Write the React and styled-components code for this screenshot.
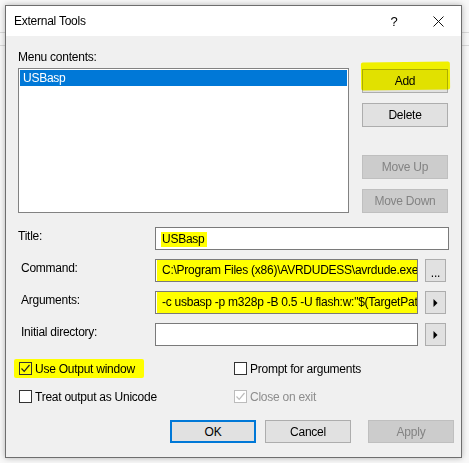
import React from "react";
import styled, { createGlobalStyle, css } from "styled-components";

const Global = createGlobalStyle`
  html, body { margin: 0; padding: 0; }
  body {
    width: 469px;
    height: 463px;
    overflow: hidden;
    font-family: "Segoe UI", "Liberation Sans", Arial, sans-serif;
    font-size: 12px;
    letter-spacing: -0.25px;
    color: #000;
    background-color: #f8f8f8;
    background-image:
      linear-gradient(#d9d9d9, #d9d9d9),
      linear-gradient(#d9d9d9, #d9d9d9);
    background-repeat: no-repeat;
    background-size: 100% 1px, 100% 1px;
    background-position: 0 32px, 0 45px;
  }
`;

const Page = styled.div`
  padding: 5px 0 0 5px;
`;

const Dialog = styled.div`
  width: 457px;
  box-sizing: border-box;
  border: 1px solid #6e6e6e;
  box-shadow: 0 0 6px rgba(0, 0, 0, 0.28);
  background: #f0f0f0;
`;

const TitleBar = styled.div`
  height: 30px;
  background: #fff;
  display: flex;
  align-items: center;
  padding-left: 8px;
`;

const TitleText = styled.div`
  flex: 1;
  font-size: 12px;
`;

const Help = styled.div`
  width: 16px;
  text-align: center;
  font-size: 13px;
  margin-right: 13px;
`;

const Close = styled.div`
  width: 46px;
  height: 30px;
  display: flex;
  align-items: center;
  justify-content: center;
`;

const Body = styled.div`
  padding: 13px 7px 14px 12px;
`;

const TopSection = styled.div`
  display: flex;
  align-items: flex-start;
`;

const ListCol = styled.div`
  width: 331px;
  display: flex;
  flex-direction: column;
`;

const Label = styled.div`
  line-height: 16px;
  height: 16px;
  white-space: nowrap;
`;

const ListBox = styled.div`
  margin-top: 3px;
  height: 145px;
  box-sizing: border-box;
  border: 1px solid #828282;
  background: #fff;
  padding: 1px;
`;

const ListItem = styled.div`
  height: 16px;
  line-height: 16px;
  padding-left: 3px;
  background: ${(p) => (p.$selected ? "#0078d7" : "transparent")};
  color: ${(p) => (p.$selected ? "#fff" : "#000")};
`;

const ButtonCol = styled.div`
  margin-left: 13px;
  padding-top: 20px;
  display: flex;
  flex-direction: column;
`;

const Button = styled.div`
  position: relative;
  width: 86px;
  height: ${(p) => p.$h || 23}px;
  box-sizing: border-box;
  display: flex;
  align-items: center;
  justify-content: center;
  margin-top: ${(p) => p.$mt || 0}px;
  border: 1px solid #adadad;
  background: #e1e1e1;
  color: #000;
  ${(p) =>
    p.$disabled &&
    css`
      border-color: #bfbfbf;
      background: #cccccc;
      color: #838383;
    `}
  ${(p) =>
    p.$default &&
    css`
      border: 2px solid #0078d7;
    `}
`;

const ButtonMarker = styled.span`
  position: absolute;
  left: -2px;
  right: -3px;
  top: -8px;
  bottom: 2px;
  background: #ffff00;
  mix-blend-mode: multiply;
  border-radius: 2px;
  transform: rotate(-0.6deg);
`;

const ButtonLabel = styled.span`
  position: relative;
`;

const Form = styled.div`
  margin-top: 14px;
  margin-right: 5px;
  display: flex;
  flex-direction: column;
  gap: 9px;
`;

const Row = styled.div`
  display: flex;
  align-items: flex-start;
  padding-right: ${(p) => (p.$withButton ? 3 : 0)}px;
`;

const RowLabel = styled.div`
  width: 137px;
  box-sizing: border-box;
  padding-left: ${(p) => p.$indent || 0}px;
  padding-top: 1px;
  line-height: 16px;
  white-space: nowrap;
`;

const TextBox = styled.div`
  flex: 1;
  height: 23px;
  box-sizing: border-box;
  border: 1px solid #7a7a7a;
  background: #fff;
  padding-left: 6px;
  display: flex;
  align-items: center;
  overflow: hidden;
  white-space: nowrap;
`;

const Marker = styled.span`
  background: #ffff00;
  display: inline-block;
  white-space: nowrap;
  line-height: ${(p) => p.$h}px;
  margin-left: -${(p) => p.$pl}px;
  padding-left: ${(p) => p.$pl}px;
  padding-right: ${(p) => p.$pr || 0}px;
  margin-top: ${(p) => p.$mt || 0}px;
`;

const SmallButton = styled.div`
  width: 21px;
  height: 23px;
  margin-left: 7px;
  box-sizing: border-box;
  border: 1px solid #adadad;
  background: #e1e1e1;
  display: flex;
  align-items: center;
  justify-content: center;
  padding-top: ${(p) => p.$pt || 0}px;
  font-size: 12px;
  line-height: 1;
`;

const Checks = styled.div`
  margin-top: 16px;
  margin-left: 1px;
  display: grid;
  grid-template-columns: 215px 215px;
  row-gap: 15px;
`;

const CheckItem = styled.div`
  display: flex;
  align-items: center;
  height: 13px;
  gap: 3px;
  color: ${(p) => (p.$disabled ? "#8d8d8d" : "#000")};
  ${(p) =>
    p.$marked &&
    css`
      background: #ffff00;
      margin: -3px 0 -3px -5px;
      padding: 3px 0 3px 5px;
      width: 125px;
      height: 13px;
      border-radius: 2px;
    `}
`;

const Box = styled.div`
  width: 13px;
  height: 13px;
  box-sizing: border-box;
  border: 1px solid ${(p) => (p.$disabled ? "#bcbcbc" : "#333")};
  background: ${(p) => (p.$marked ? "transparent" : "#fff")};
  display: flex;
  align-items: center;
  justify-content: center;
  flex-shrink: 0;
`;

const Footer = styled.div`
  margin-top: 17px;
  display: flex;
  justify-content: flex-end;
  gap: 9px;
`;

const Gap = styled.div`
  width: ${(p) => p.$w}px;
  margin-left: -9px;
`;

const Check = ({ color }) => (
  <svg width="11" height="11" viewBox="0 0 11 11">
    <path d="M1.5 5.5 L4.2 8.3 L9.5 2" fill="none" stroke={color} strokeWidth="1.2" />
  </svg>
);

const Arrow = () => (
  <svg width="5" height="8" viewBox="0 0 5 8">
    <path d="M0.5 0 L4.5 4 L0.5 8 Z" fill="#000" />
  </svg>
);

function CheckBox({ label, checked, disabled, marked }) {
  return (
    <CheckItem $disabled={disabled} $marked={marked}>
      <Box $disabled={disabled} $marked={marked}>
        {checked && <Check color={disabled ? "#bcbcbc" : "#222"} />}
      </Box>
      <span>{label}</span>
    </CheckItem>
  );
}

export default function App() {
  return (
    <>
      <Global />
      <Page>
        <Dialog>
          <TitleBar>
            <TitleText>External Tools</TitleText>
            <Help>?</Help>
            <Close>
              <svg width="11" height="11" viewBox="0 0 11 11">
                <path d="M0.5 0.5 L10.5 10.5 M10.5 0.5 L0.5 10.5" stroke="#111" strokeWidth="1" />
              </svg>
            </Close>
          </TitleBar>
          <Body>
            <TopSection>
              <ListCol>
                <Label>Menu contents:</Label>
                <ListBox>
                  <ListItem $selected>USBasp</ListItem>
                </ListBox>
              </ListCol>
              <ButtonCol>
                <Button $h={24}>
                  <ButtonMarker />
                  <ButtonLabel>Add</ButtonLabel>
                </Button>
                <Button $h={24} $mt={10}>Delete</Button>
                <Button $h={24} $mt={28} $disabled>Move Up</Button>
                <Button $h={24} $mt={10} $disabled>Move Down</Button>
              </ButtonCol>
            </TopSection>

            <Form>
              <Row>
                <RowLabel>Title:</RowLabel>
                <TextBox>
                  <Marker $h={15} $pl={1} $pr={2} $mt={2}>USBasp</Marker>
                </TextBox>
              </Row>
              <Row $withButton>
                <RowLabel $indent={3}>Command:</RowLabel>
                <TextBox>
                  <Marker $h={21} $pl={5} $pr={4}>C:\Program Files (x86)\AVRDUDESS\avrdude.exe</Marker>
                </TextBox>
                <SmallButton $pt={5}>...</SmallButton>
              </Row>
              <Row $withButton>
                <RowLabel $indent={3}>Arguments:</RowLabel>
                <TextBox>
                  <Marker $h={21} $pl={5} $pr={5} $mt={-1}>-c usbasp -p m328p -B 0.5 -U flash:w:"$(TargetPath)":i</Marker>
                </TextBox>
                <SmallButton><Arrow /></SmallButton>
              </Row>
              <Row $withButton>
                <RowLabel $indent={3}>Initial directory:</RowLabel>
                <TextBox />
                <SmallButton><Arrow /></SmallButton>
              </Row>
            </Form>

            <Checks>
              <CheckBox label="Use Output window" checked marked />
              <CheckBox label="Prompt for arguments" />
              <CheckBox label="Treat output as Unicode" />
              <CheckBox label="Close on exit" checked disabled />
            </Checks>

            <Footer>
              <Button $default>OK</Button>
              <Button>Cancel</Button>
              <Gap $w={8} />
              <Button $disabled>Apply</Button>
            </Footer>
          </Body>
        </Dialog>
      </Page>
    </>
  );
}
